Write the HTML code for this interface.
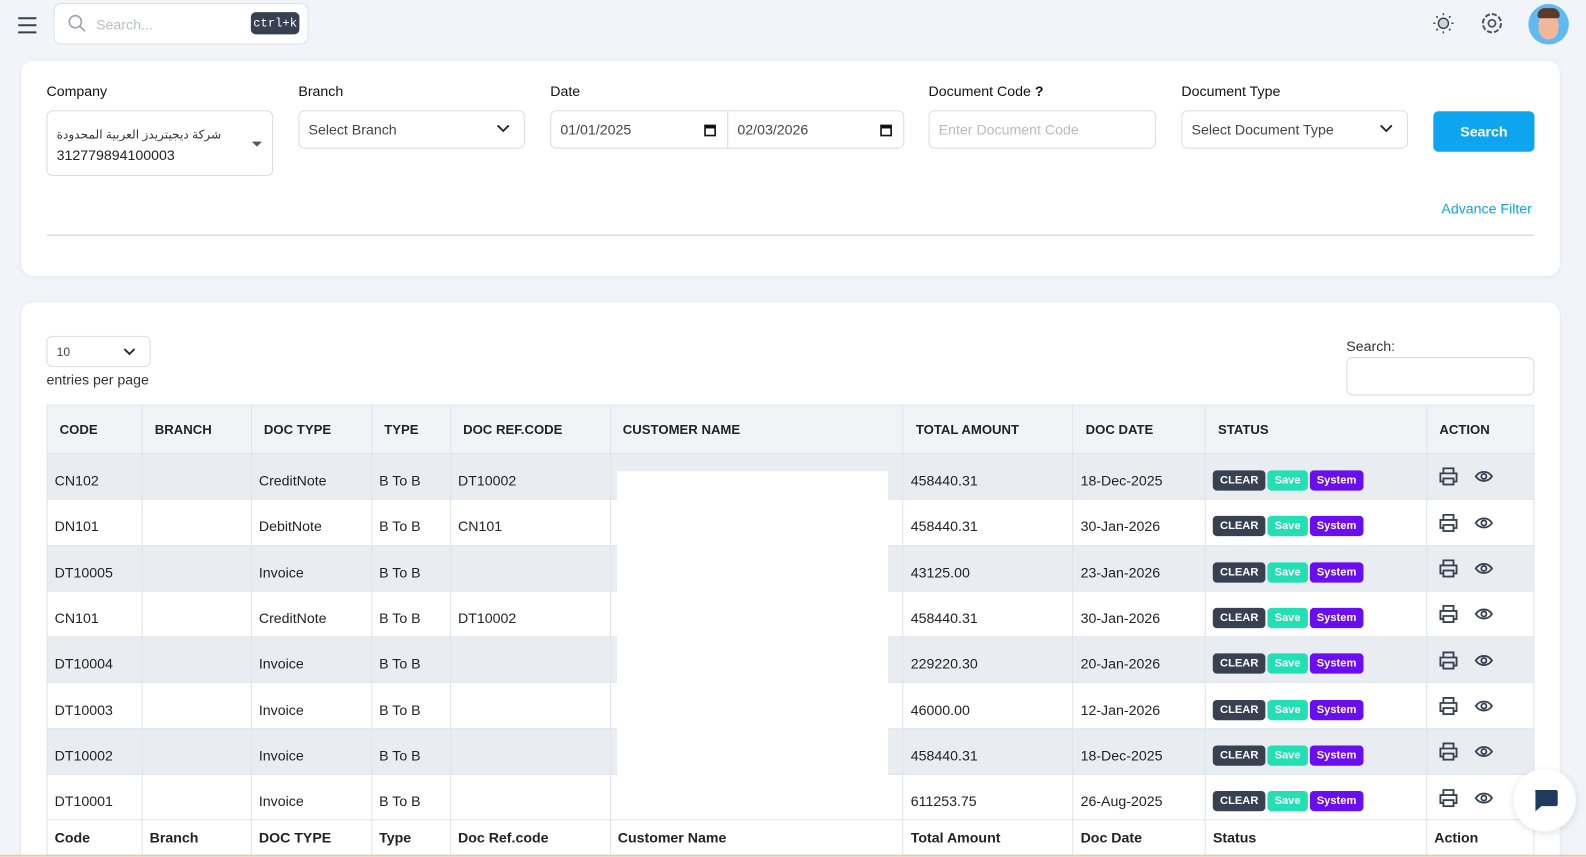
<!DOCTYPE html>
<html style="overflow:hidden"><head><meta charset="utf-8"><style>
*{box-sizing:border-box;margin:0;padding:0}
html,body{width:1586px;height:857px;overflow:hidden}
body{background:#f1f4f8;font-family:"Liberation Sans","Noto Sans CJK SC",sans-serif;color:#1f2937;position:relative;font-size:14px}
#w{position:absolute;left:0;top:0;width:1568px;height:847px;transform:scale(1.0115);transform-origin:0 0;overflow:hidden}
.abs{position:absolute}
.card{position:absolute;background:#fff;border-radius:12px;box-shadow:0 1px 4px rgba(0,0,0,.06)}
.lbl{position:absolute;font-size:14px;color:#111}
.inp{position:absolute;border:1px solid #d9dde3;border-radius:6px;background:#fff;font-size:14px;color:#444;padding-left:9px;display:flex;align-items:center}
table{position:absolute;left:46px;top:400px;border-collapse:collapse;font-size:14px;width:1471px}
td,th{border:1px solid #dfe3e8;text-align:left;padding:0 7px;color:#222}
th{height:48px;font-weight:bold;font-size:13px;padding-left:12px;background:#f1f4f7}
tbody td{height:45.3px;padding-top:8px}
tbody tr:nth-child(odd) td{background:#e9edf1}
tfoot td{height:35px;font-weight:bold;background:#fff}
.b{display:inline-block;font-size:11px;font-weight:bold;color:#fff;border-radius:4px;padding:4px 7px;margin-right:2px}
</style></head><body><div id="w">
<svg class="abs" style="left:17px;top:16px" width="20" height="18"><path d="M1 2h18M1 9h18M1 16h18" stroke="#374151" stroke-width="2"/></svg>
<div class="abs" style="left:53px;top:3px;width:252px;height:41px;background:#fff;border:1px solid #dde1e6;border-radius:8px"></div>
<svg class="abs" style="left:67px;top:14px" width="18" height="18"><circle cx="7.5" cy="7.5" r="6" fill="none" stroke="#9ca3af" stroke-width="1.6"/><path d="M12 12l5 5" stroke="#9ca3af" stroke-width="1.6"/></svg>
<div class="abs" style="left:95px;top:16px;color:#b8bec8;font-size:14px">Search...</div>
<div class="abs" style="left:248px;top:12px;width:48px;height:22px;background:#374151;border-radius:5px;color:#fff;font-family:'Liberation Mono',monospace;font-size:12px;text-align:center;line-height:22px">ctrl+k</div>
<svg class="abs" style="left:1416px;top:12px" width="22" height="22"><circle cx="11" cy="11" r="5" fill="#d1d5db" stroke="#374151" stroke-width="1.4"/><path d="M11 1v2M11 19v2M1 11h2M19 11h2M4 4l1.5 1.5M16.5 16.5L18 18M4 18l1.5-1.5M16.5 5.5L18 4" stroke="#374151" stroke-width="1.4"/></svg>
<svg class="abs" style="left:1463px;top:11px" width="24" height="24"><circle cx="12" cy="12" r="9" fill="none" stroke="#4b5563" stroke-width="2" stroke-dasharray="5 2"/><circle cx="12" cy="12" r="3.5" fill="none" stroke="#4b5563" stroke-width="1.8"/></svg>
<div class="abs" style="left:1511px;top:4px;width:40px;height:40px;border-radius:50%;background:#5fb9f5;overflow:hidden"><div style="position:absolute;left:10px;top:9px;width:20px;height:26px;border-radius:45%;background:#f2b79a"></div><div style="position:absolute;left:9px;top:4px;width:22px;height:10px;border-radius:8px 8px 3px 3px;background:#5a3a28"></div></div>

<div class="card" style="left:21px;top:60px;width:1521px;height:213px"></div>
<div class="lbl" style="left:46px;top:82px">Company</div>
<div class="lbl" style="left:295px;top:82px">Branch</div>
<div class="lbl" style="left:544px;top:82px">Date</div>
<div class="lbl" style="left:918px;top:82px">Document Code <b>?</b></div>
<div class="lbl" style="left:1168px;top:82px">Document Type</div>
<div class="inp" style="left:46px;top:109px;width:224px;height:65px;display:block;padding-top:13px;line-height:20px"><div style="font-size:12px;color:#333">شركة ديجيتريدز العربية المحدودة</div><div style="color:#222">312779894100003</div><div style="position:absolute;right:10px;top:30px;border:5px solid transparent;border-top-color:#555"></div></div>
<div class="inp" style="left:295px;top:109px;width:224px;height:38px">Select Branch<svg class="abs" style="right:14px;top:13px" width="13" height="9"><path d="M1 1l5.5 5.5L12 1" fill="none" stroke="#222" stroke-width="1.8"/></svg></div>
<div class="inp" style="left:544px;top:109px;width:176px;height:38px;border-radius:6px 0 0 6px">01/01/2025<svg class="abs" style="right:11px;top:12px" width="12" height="13"><rect x="1" y="2" width="10" height="10" fill="none" stroke="#111" stroke-width="1.6"/><rect x="1" y="2" width="10" height="3" fill="#111"/></svg></div>
<div class="inp" style="left:719px;top:109px;width:175px;height:38px;border-radius:0 6px 6px 0">02/03/2026<svg class="abs" style="right:11px;top:12px" width="12" height="13"><rect x="1" y="2" width="10" height="10" fill="none" stroke="#111" stroke-width="1.6"/><rect x="1" y="2" width="10" height="3" fill="#111"/></svg></div>
<div class="inp" style="left:918px;top:109px;width:225px;height:38px;color:#b5bbc4">Enter Document Code</div>
<div class="inp" style="left:1168px;top:109px;width:224px;height:38px">Select Document Type<svg class="abs" style="right:14px;top:13px" width="13" height="9"><path d="M1 1l5.5 5.5L12 1" fill="none" stroke="#222" stroke-width="1.8"/></svg></div>
<div class="abs" style="left:1417px;top:110px;width:100px;height:40px;background:#0ea5f0;border-radius:5px;color:#fff;font-weight:bold;text-align:center;line-height:40px">Search</div>
<div class="abs" style="left:1425px;top:198px;color:#0ea5f0;font-size:14px">Advance Filter</div>
<div class="abs" style="left:46px;top:232px;width:1471px;height:1px;background:#c8ccd2"></div>

<div class="card" style="left:21px;top:299px;width:1521px;height:560px"></div>
<div class="inp" style="left:46px;top:332px;width:103px;height:31px;font-size:12px">10<svg class="abs" style="right:14px;top:11px" width="12" height="8"><path d="M1 1l5 5 5-5" fill="none" stroke="#222" stroke-width="1.8"/></svg></div>
<div class="abs" style="left:46px;top:367px;font-size:14px;color:#333">entries per page</div>
<div class="abs" style="left:1331px;top:334px;font-size:14px;color:#333">Search:</div>
<div class="inp" style="left:1331px;top:353px;width:186px;height:38px"></div>
<table>
<colgroup><col style="width:94px"><col style="width:108px"><col style="width:119px"><col style="width:78px"><col style="width:158px"><col style="width:290px"><col style="width:168px"><col style="width:131px"><col style="width:219px"><col style="width:106px"></colgroup>
<thead><tr><th>CODE</th><th>BRANCH</th><th>DOC TYPE</th><th>TYPE</th><th>DOC REF.CODE</th><th>CUSTOMER NAME</th><th>TOTAL AMOUNT</th><th>DOC DATE</th><th>STATUS</th><th>ACTION</th></tr></thead>
<tbody>
<tr><td>CN102</td><td></td><td>CreditNote</td><td>B To B</td><td>DT10002</td><td></td><td>458440.31</td><td>18-Dec-2025</td><td>S</td><td>A</td></tr>
<tr><td>DN101</td><td></td><td>DebitNote</td><td>B To B</td><td>CN101</td><td></td><td>458440.31</td><td>30-Jan-2026</td><td>S</td><td>A</td></tr>
<tr><td>DT10005</td><td></td><td>Invoice</td><td>B To B</td><td></td><td></td><td>43125.00</td><td>23-Jan-2026</td><td>S</td><td>A</td></tr>
<tr><td>CN101</td><td></td><td>CreditNote</td><td>B To B</td><td>DT10002</td><td></td><td>458440.31</td><td>30-Jan-2026</td><td>S</td><td>A</td></tr>
<tr><td>DT10004</td><td></td><td>Invoice</td><td>B To B</td><td></td><td></td><td>229220.30</td><td>20-Jan-2026</td><td>S</td><td>A</td></tr>
<tr><td>DT10003</td><td></td><td>Invoice</td><td>B To B</td><td></td><td></td><td>46000.00</td><td>12-Jan-2026</td><td>S</td><td>A</td></tr>
<tr><td>DT10002</td><td></td><td>Invoice</td><td>B To B</td><td></td><td></td><td>458440.31</td><td>18-Dec-2025</td><td>S</td><td>A</td></tr>
<tr><td>DT10001</td><td></td><td>Invoice</td><td>B To B</td><td></td><td></td><td>611253.75</td><td>26-Aug-2025</td><td>S</td><td>A</td></tr>
</tbody>
<tfoot><tr><td>Code</td><td>Branch</td><td>DOC TYPE</td><td>Type</td><td>Doc Ref.code</td><td>Customer Name</td><td>Total Amount</td><td>Doc Date</td><td>Status</td><td>Action</td></tr></tfoot>
</table>
<div class="abs" style="left:610px;top:466px;width:268px;height:329px;background:#fff"></div>
<div class="abs" style="left:0;top:845px;width:1586px;height:2px;background:#e8c9a8"></div>
<div class="abs" style="left:1496px;top:760px;width:62px;height:62px;border-radius:50%;background:#fff;box-shadow:0 2px 8px rgba(0,0,0,.12)"></div>
<svg class="abs" style="left:1515px;top:779px" width="26" height="24"><path d="M3 2h20a2 2 0 0 1 2 2v12a2 2 0 0 1-2 2H9l-6 5V4a2 2 0 0 1 0-2z" fill="#1e3a5f"/></svg>
</div>
<script>
document.querySelectorAll('tbody tr').forEach(function(r){var c=r.children;
c[8].innerHTML='<span class="b" style="background:#374151">CLEAR</span><span class="b" style="background:#22e0b4">Save</span><span class="b" style="background:#6a0df0">System</span>';
c[9].innerHTML='<svg width="70" height="20" style="margin-left:5px;margin-top:-8px;vertical-align:middle"><g fill="none" stroke="#374151" stroke-width="1.8"><path d="M4 6V1h10v5M4 14H1V6h16v8h-3"/><rect x="4" y="11" width="10" height="6"/><path d="M36 9c4-6 12-6 16 0c-4 6-12 6-16 0z"/><circle cx="44" cy="9" r="2.5"/></g></svg>';});
</script>
</body></html>
